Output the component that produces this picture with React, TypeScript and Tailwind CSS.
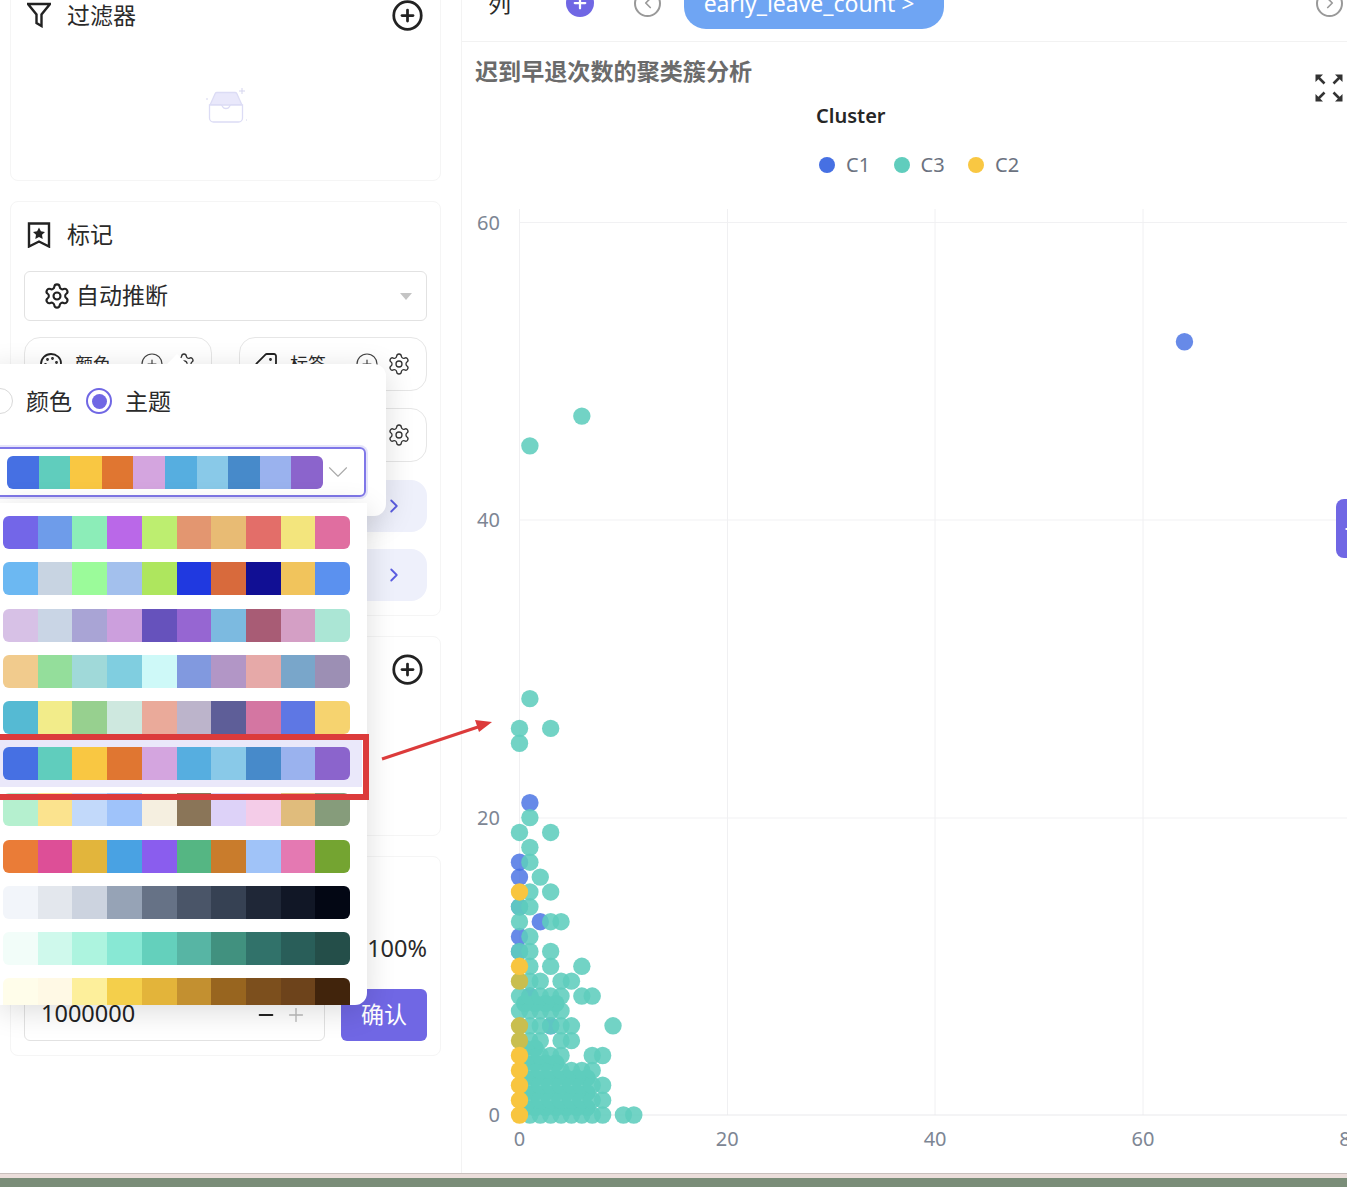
import React from "react";
import { ChevronDown, ChevronLeft, ChevronRight, CirclePlus, Minus, Palette, Plus, Settings, Tag } from "lucide-react";

const palettes = [
  ["#7366E8", "#6E9CEA", "#8CEDB8", "#BA68E8", "#BDEE70", "#E39670", "#E8BB74", "#E36E69", "#F3E57D", "#E06EA0"],
  ["#6CB8F2", "#C8D4E2", "#9BFB9A", "#A3C0ED", "#AEE65E", "#2039E0", "#D86A3C", "#110F94", "#F1C45C", "#5B91EF"],
  ["#D7C1E6", "#C9D5E5", "#A9A4D5", "#CC9FDD", "#6652BC", "#9666D2", "#7CBAE0", "#A85C75", "#D49FC5", "#ABE6D5"],
  ["#F1CB8D", "#94DE9B", "#A0D9D9", "#80CEE0", "#CEF9F8", "#8199DF", "#B296C6", "#E6A9A8", "#79A6CA", "#9C8FB4"],
  ["#55BAD3", "#F2EC8A", "#97D08F", "#CEE8DF", "#EAAA9A", "#BCB4CB", "#5E5E98", "#D476A2", "#5E77E4", "#F6D36F"],
  ["#4670E3", "#60CDBD", "#F9C742", "#E07631", "#D4A5DF", "#56AEE0", "#89C9E8", "#478ACA", "#9AB2EE", "#8B64CC"],
  ["#B5F0CF", "#FBE38E", "#C2D9FA", "#9FC3FA", "#F5EFE0", "#8A7558", "#DDD2F8", "#F4CCE8", "#E0BC7C", "#869C7B"],
  ["#EA7C37", "#DD4F97", "#E2B53C", "#49A2E3", "#8A5DEE", "#55B683", "#C97C2C", "#A0C3F8", "#E479B2", "#74A431"],
  ["#F2F5FA", "#E3E7ED", "#CCD3DF", "#96A3B6", "#667286", "#4A5568", "#364153", "#1F2737", "#111726", "#030714"],
  ["#F2FDF9", "#CFF9EC", "#ADF4DF", "#88E8D4", "#64D0BC", "#57B5A4", "#41917F", "#31726A", "#295E59", "#244E49"],
  ["#FFFDEA", "#FFF9E5", "#FDEF9B", "#F4CF4B", "#E3B43A", "#C39030", "#98651F", "#7C4F1D", "#6D431B", "#41240C"],
];

// teal points per y value
const tealRows: Record<number, number[]> = {
  0: [1, 2, 3, 4, 5, 6, 7, 8, 10, 11],
  1: [1, 2, 3, 4, 5, 6, 7, 8],
  2: [1, 2, 3, 4, 5, 6, 7, 8],
  3: [1, 2, 3, 4, 5, 6, 7],
  4: [1, 2, 3, 4, 7, 8],
  5: [1, 2, 4, 5],
  6: [1, 2, 3, 4, 5, 9],
  7: [0, 1, 2, 3, 4],
  8: [0, 1, 2, 3, 4, 6, 7],
  9: [1, 2, 4, 5],
  10: [1, 3, 6],
  11: [0, 1, 3],
  12: [1],
  13: [0, 3, 4],
  14: [0, 1],
  15: [1, 3],
  16: [2],
  17: [1],
  18: [1],
  19: [0, 3],
  20: [1],
  25: [0],
  26: [0, 3],
  28: [1],
  45: [1],
  47: [6],
};
const blue = [[1, 21], [0, 17], [0, 16], [0, 14], [2, 13], [0, 12], [0, 11], [1, 8], [3, 6], [64, 52]];
const yellow = [[0, 0], [0, 1], [0, 2], [0, 3], [0, 4], [0, 10], [0, 15]];
const olive = [[0, 5], [0, 6], [0, 9]];
// dense overlap in the lower left, the picture shows no gaps there
const fill = [
  ...[0.5, 1.5, 2.5].flatMap((y) => [0.5, 1.5, 2.5, 3.5, 4.5, 5.5, 6.5].map((x) => [x, y])),
  ...[3.5, 7.5].flatMap((y) => [0.5, 1.5, 2.5, 3.5].map((x) => [x, y])),
  [0.5, 4.5],
  [1.5, 4.5],
];

const px = (x: number) => 519.5 + x * 10.39;
const py = (y: number) => 1114 - y * 14.87;

const Swatches = ({ colors, className }: { colors: string[]; className: string }) => (
  <div className={`flex h-[33px] overflow-hidden rounded-md ${className}`}>
    {colors.map((c, i) => (
      <div key={i} className="flex-1" style={{ backgroundColor: c }} />
    ))}
  </div>
);

const PlusButton = () => <CirclePlus size={33} strokeWidth={2} className="text-[#222]" />;

const FieldButton = ({ icon, label }: { icon: React.ReactNode; label: string }) => (
  <div className="flex h-[54px] items-center rounded-2xl border border-[#e6e6e6] pl-[14px] pr-[15px]">
    {icon}
    <span className="ml-[12px] text-[18px] text-[#2a2a2a]">{label}</span>
    <CirclePlus size={24} strokeWidth={1.2} className="ml-auto text-[#444]" />
    <Settings size={24} strokeWidth={1.3} className="ml-[8px] text-[#333]" />
  </div>
);

const ExpandRow = () => (
  <div className="flex h-[52px] items-center justify-end rounded-2xl bg-[#eef0fb] pr-[22px]">
    <ChevronRight size={22} strokeWidth={2} className="text-[#5a5ce0]" />
  </div>
);

const Card = ({ className, children }: { className: string; children?: React.ReactNode }) => (
  <section className={`rounded-lg border border-[#f5f5f5] bg-white px-[13px] ${className}`}>{children}</section>
);

const Sidebar = () => (
  <aside className="relative flex w-[462px] shrink-0 flex-col gap-[20px] border-r border-[#f3f3f3] pl-[10px] pr-[20px]">
    <Card className="-mt-5 flex h-[201px] flex-col pt-[19px]">
      <div className="flex h-[30px] items-center pl-[3px] pr-[3px]">
        <svg width="24" height="26" viewBox="0 0 24 26" fill="none" stroke="#222" strokeWidth="2.4" strokeLinejoin="miter">
          <path d="M1 2h22l-8.500 10.500V24l-5-3v-8.500z" />
        </svg>
        <span className="ml-[16px] text-[23px] text-[#2a2a2a]">过滤器</span>
        <div className="ml-auto"><PlusButton /></div>
      </div>
      <div className="mt-[54px] flex justify-center">
        <svg width="44" height="42" viewBox="0 0 44 42" fill="none">
          <path d="M13 8.500h18a2 2 0 0 1 1.800 1.100L38 21H6l5.200-11.400A2 2 0 0 1 13 8.500z" fill="#e9e8fb" stroke="#dcdcf5" strokeWidth="1.300" />
          <path d="M5.500 21H17c1 0 1.300 1 1.800 2s1.200 1.500 3.200 1.500 2.700-.5 3.200-1.500.8-2 1.800-2h11.500v13a4 4 0 0 1-4 4h-25a4 4 0 0 1-4-4z" fill="#fff" stroke="#dcdcf5" strokeWidth="1.300" />
          <path d="M38 4v6M35 7h6M3 14v2M42 36h1" stroke="#d5d5ee" strokeWidth="1" />
        </svg>
      </div>
    </Card>

    <Card className="flex h-[415px] flex-col pt-[18px]">
      <div className="flex h-[30px] items-center pl-[3px]">
        <svg width="24" height="26" viewBox="0 0 24 26" fill="none">
          <path d="M2 1.500h20v23l-10-5-10 5z" stroke="#222" strokeWidth="2.400" />
          <path d="M12 5.500l1.900 3.800 4.100.6-3 2.900.7 4.100-3.700-2-3.700 2 .7-4.100-3-2.900 4.100-.6z" fill="#222" />
        </svg>
        <span className="ml-[16px] -mt-[2px] text-[23px] text-[#2a2a2a]">标记</span>
      </div>
      <div className="mt-[21px] flex h-[50px] items-center rounded-md border border-[#e2e2e2] pl-[18px] pr-[14px]">
        <Settings size={28} strokeWidth={1.8} className="text-[#222]" />
        <span className="ml-[5px] -mt-[2px] text-[23px] text-[#2a2a2a]">自动推断</span>
        <span className="ml-auto h-0 w-0 border-x-[6px] border-t-[7px] border-x-transparent border-t-[#c4c4c4]" />
      </div>
      <div className="mt-[16px] grid grid-cols-2 gap-x-[27px] gap-y-[17px]">
        <FieldButton icon={<Palette size={24} strokeWidth={1.8} className="text-[#222]" />} label="颜色" />
        <FieldButton icon={<Tag size={24} strokeWidth={1.8} className="rotate-90 text-[#222]" />} label="标签" />
        <FieldButton icon={<span className="w-6" />} label="大小" />
        <div className="flex h-[54px] items-center justify-end rounded-2xl border border-[#e6e6e6] pr-[15px]">
          <Settings size={24} strokeWidth={1.3} className="text-[#333]" />
        </div>
      </div>
      <div className="mt-[18px] flex flex-col gap-[17px]">
        <ExpandRow />
        <ExpandRow />
      </div>
    </Card>

    <Card className="flex h-[200px] justify-end pr-[16px] pt-[16px]">
      <PlusButton />
    </Card>

    <Card className="flex h-[200px] flex-col justify-end pb-[14px]">
      <div className="mb-[26px] text-right text-[23.500px] leading-[30px] text-[#2a2a2a]">100%</div>
      <div className="flex gap-[16px]">
        <div className="flex h-[52px] w-[301px] items-center rounded-md border border-[#e2e2e2] pl-[16px] pr-[17px]">
          <span className="-mt-[3px] text-[23.500px] text-[#222]">1000000</span>
          <Minus size={22} strokeWidth={2} className="ml-auto text-[#222]" />
          <Plus size={22} strokeWidth={1.5} className="ml-[8px] text-[#bbb]" />
        </div>
        <div className="flex h-[52px] flex-1 items-center justify-center rounded-md bg-[#7067e4] pb-[2px] text-[23px] text-white">确认</div>
      </div>
    </Card>

    {/* theme popover */}
    <div className="absolute left-[-13px] top-[364px] z-10 h-[152px] w-[399px] rounded-xl bg-white pt-[22px] shadow-[0_6px_30px_rgba(0,0,0,0.14)]">
      <div className="absolute left-[183px] top-[-7px] h-[14px] w-[14px] rotate-45 bg-white" />
      <div className="flex h-[30px] items-center text-[23px] text-[#2a2a2a]">
        <span className="h-[26px] w-[26px] rounded-full border border-[#d9d9d9]" />
        <span className="ml-[13px]">颜色</span>
        <span className="ml-[14px] flex h-[26px] w-[26px] items-center justify-center rounded-full border-2 border-[#7067e4]">
          <span className="h-[15px] w-[15px] rounded-full bg-[#7067e4]" />
        </span>
        <span className="ml-[13px]">主题</span>
      </div>
      <div className="mt-[31px] flex h-[50px] w-[379px] items-center rounded-md border-2 border-[#7f77e8] pl-[18px] shadow-[0_0_0_2px_rgba(112,103,228,0.18)]">
        <Swatches colors={palettes[5]} className="w-[316px]" />
        <ChevronDown size={34} strokeWidth={0.8} className="-ml-[2px] text-[#aaa]" />
      </div>
    </div>

    {/* theme dropdown */}
    <div className="absolute left-0 top-[503px] z-20 flex h-[502px] w-[367px] flex-col gap-[13.200px] overflow-hidden rounded-br-xl bg-white pl-[3px] pr-[17px] pt-[13.300px] shadow-[0_6px_30px_rgba(0,0,0,0.14)]">
      {palettes.map((colors, i) => (
        <div key={i} className="relative shrink-0">
          {i === 5 && <div className="absolute -left-[3px] -right-[12px] -top-[7px] -bottom-[7px] bg-[#eae8fa]" />}
          <Swatches colors={colors} className="relative w-[347px]" />
        </div>
      ))}
    </div>

    {/* red annotation */}
    <div className="absolute left-[-10px] top-[734px] z-30 h-[66px] w-[379px] border-[6px] border-[#dc3b3b]" />
    <svg className="absolute left-[375px] top-[712px] z-30" width="125" height="55" viewBox="375 712 125 55">
      <path d="M382 759l96-32" stroke="#dc3b3b" strokeWidth="3" />
      <path d="M492 722l-17-2 4 12z" fill="#dc3b3b" />
    </svg>
  </aside>
);

const Chart = () => (
  <svg className="mt-[21.500px] block" width="885" height="955" viewBox="462 200 885 955">
    {[221.5, 519, 817].map((y) => (
      <line key={y} x1="519.500" x2="1347" y1={y} y2={y} stroke="#f1f1f3" />
    ))}
    {[519.5, 727.5, 935, 1143].map((x) => (
      <line key={x} x1={x} x2={x} y1="208" y2="1114" stroke="#f0f0f2" />
    ))}
    <line x1="519.500" x2="1347" y1="1114" y2="1114" stroke="#e9e9ec" />
    {[0, 20, 40, 60].map((v) => (
      <text key={v} x="500" y={py(v) + 7} textAnchor="end" fontSize="20" fill="#7d8694">{v}</text>
    ))}
    {[0, 20, 40, 60, 80].map((v) => (
      <text key={v} x={px(v)} y="1145" textAnchor="middle" fontSize="20" fill="#7d8694">{v}</text>
    ))}
    {blue.map(([x, y]) => (
      <circle key={`${x}-${y}`} cx={px(x)} cy={py(y)} r="8.700" fill="#4670E3" fillOpacity="0.82" />
    ))}
    {fill.map(([x, y]) => (
      <circle key={`${x}-${y}`} cx={px(x)} cy={py(y)} r="8.700" fill="#5FCDBD" />
    ))}
    {Object.entries(tealRows).flatMap(([y, xs]) =>
      xs.map((x) => <circle key={`${x}-${y}`} cx={px(x)} cy={py(Number(y))} r="8.700" fill="#5FCDBD" fillOpacity="0.88" />)
    )}
    {olive.map(([x, y]) => (
      <circle key={`${x}-${y}`} cx={px(x)} cy={py(y)} r="8.700" fill="#C9BE4F" />
    ))}
    {yellow.map(([x, y]) => (
      <circle key={`${x}-${y}`} cx={px(x)} cy={py(y)} r="8.700" fill="#F8C53F" />
    ))}
  </svg>
);

const LegendItem = ({ color, label }: { color: string; label: string }) => (
  <div className="flex w-[74.500px] items-center">
    <span className="h-4 w-4 rounded-full" style={{ backgroundColor: color }} />
    <span className="ml-[11px] text-[20px] text-[#6b7280]">{label}</span>
  </div>
);

const MainPanel = () => (
  <main className="relative flex-1 overflow-hidden">
    <div className="-mt-5 flex h-[62px] items-center border-b border-[#f2f2f2] pb-[15px] pl-[26px] pr-[4px]">
      <span className="text-[23px] text-[#2a2a2a]">列</span>
      <span className="ml-[55px] flex h-[28px] w-[28px] items-center justify-center rounded-full bg-[#7067e4]">
        <Plus size={18} strokeWidth={3} className="text-white" />
      </span>
      <span className="ml-[40px] flex h-[27px] w-[27px] items-center justify-center rounded-full border-[2.500px] border-[#999]">
        <ChevronLeft size={18} strokeWidth={2.2} className="text-[#999]" />
      </span>
      <span className="ml-[23px] flex h-[52px] w-[260px] items-center justify-center rounded-[22px] bg-[#6fa5f3] pr-[10px] text-[23px] text-white">
        early_leave_count &gt;
      </span>
      <span className="ml-auto flex h-[27px] w-[27px] items-center justify-center rounded-full border-[2.500px] border-[#999]">
        <ChevronRight size={18} strokeWidth={2.2} className="text-[#999]" />
      </span>
    </div>

    <div className="mt-[14px] flex h-[30px] items-start justify-between pl-[13px] pr-[4px]">
      <h2 className="text-[23.100px] font-bold leading-[30px] text-[#6b6b6b]">迟到早退次数的聚类簇分析</h2>
      <svg className="mt-[18px]" width="28" height="28" viewBox="0 0 28 28" fill="#333">
        <path d="M.5.500h7.500L.5 8zM27.500.500V8L20 .500zM.5 27.500V20L8 27.500zM27.500 27.500H20l7.500-7.500z" />
        <path d="M3 3l6.500 6.500M25 3l-6.500 6.500M3 25l6.500-6.500M25 25l-6.500-6.500" stroke="#333" strokeWidth="2.600" />
      </svg>
    </div>

    <div className="ml-[354px] mt-[16px] text-[20px] font-semibold leading-[28px] text-[#262626]">Cluster</div>

    <div className="ml-[357px] mt-[21px] flex h-[28px] items-center">
      <LegendItem color="#4670E3" label="C1" />
      <LegendItem color="#60CDBD" label="C3" />
      <LegendItem color="#F9C742" label="C2" />
    </div>

    <Chart />

    <div className="absolute right-[-19px] top-[499px] flex h-[59px] w-[30px] items-center justify-center rounded-l-lg bg-[#7067e4]">
      <Plus size={16} strokeWidth={3} className="text-white" />
    </div>
  </main>
);

export default function App() {
  return (
    <div className="flex h-[1187px] w-[1347px] flex-col overflow-hidden bg-white font-['Noto_Sans','Noto_Sans_CJK_SC',sans-serif]">
      <div className="flex h-[1173px] shrink-0">
        <Sidebar />
        <MainPanel />
      </div>
      <div className="h-[5px] shrink-0 border-t border-[#c9c0bd] bg-[#ebdedb]" />
      <div className="flex-1 bg-[#7a8d78]" />
    </div>
  );
}
